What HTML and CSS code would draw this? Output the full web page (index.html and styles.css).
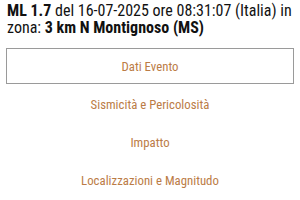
FILE: index.html
```html
<!DOCTYPE html>
<html lang="it">
<head>
<meta charset="utf-8">
<link rel="stylesheet" href="styles.css">
</head>
<body>
<div class="page">
  <h1 class="title"><b>ML 1.7</b> del 16-07-2025 ore 08:31:07 (Italia) in zona: <b>3 km N Montignoso (MS)</b></h1>
  <nav class="menu">
    <a class="item active">Dati Evento</a>
    <a class="item">Sismicità e Pericolosità</a>
    <a class="item">Impatto</a>
    <a class="item">Localizzazioni e Magnitudo</a>
  </nav>
</div>
</body>
</html>
```
FILE: styles.css
```css
html, body {
  margin: 0;
  padding: 0;
  background: #fff;
}
.page {
  padding: 0 6px;
  font-family: "Roboto Condensed", Roboto, "Liberation Sans", sans-serif;
  font-stretch: condensed;
}
.title {
  margin: 0 -2px 0 0;
  padding: 2px 0 0 1px;
  font-size: 16px;
  line-height: 17px;
  font-weight: 400;
  color: #111;
}
.title b {
  font-weight: 700;
}
.menu {
  margin-top: 12px;
  display: flex;
  flex-direction: column;
  gap: 2px;
}
.item {
  display: flex;
  align-items: center;
  justify-content: center;
  height: 36px;
  box-sizing: border-box;
  font-size: 12.8px;
  color: #bb7c46;
  border: 1.5px solid transparent;
}
.item.active {
  border-color: #9a9a9a;
}
```
